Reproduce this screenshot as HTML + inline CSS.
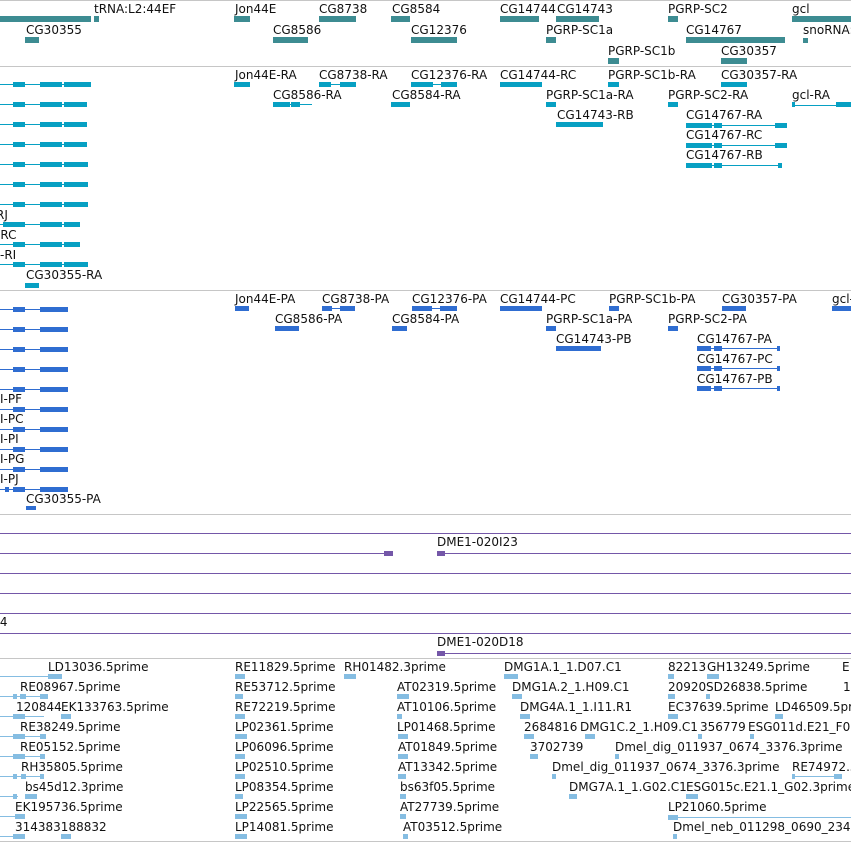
<!DOCTYPE html>
<html><head><meta charset="utf-8"><style>
html,body{margin:0;padding:0;background:#fff;width:851px;height:842px;overflow:hidden;position:relative}
.t{position:absolute;font:12px "DejaVu Sans","Liberation Sans",sans-serif;line-height:14px;white-space:nowrap;color:#111}
.b{position:absolute;height:5px}
.l{position:absolute;height:1px}
.g{background:#3d8c92}.c{background:#07a0c3}.u{background:#2f6dd1}.p{background:#7457a8}.e{background:#85bde2}
.s{position:absolute;left:0;width:851px;height:1px;background:#c6c6c6}
</style></head><body>
<div class="s" style="top:0"></div>
<div class="s" style="top:66px"></div>
<div class="s" style="top:290px"></div>
<div class="s" style="top:514px"></div>
<div class="s" style="top:658px"></div>
<div class="s" style="top:841px"></div>

<!-- Section 1 genes -->
<div class="t" style="left:94px;top:2px">tRNA:L2:44EF</div>
<div class="t" style="left:235px;top:2px">Jon44E</div>
<div class="t" style="left:319px;top:2px">CG8738</div>
<div class="t" style="left:392px;top:2px">CG8584</div>
<div class="t" style="left:500px;top:2px">CG14744</div>
<div class="t" style="left:557px;top:2px">CG14743</div>
<div class="t" style="left:668px;top:2px">PGRP-SC2</div>
<div class="t" style="left:792px;top:2px">gcl</div>
<div class="t" style="left:26px;top:23px">CG30355</div>
<div class="t" style="left:273px;top:23px">CG8586</div>
<div class="t" style="left:411px;top:23px">CG12376</div>
<div class="t" style="left:546px;top:23px">PGRP-SC1a</div>
<div class="t" style="left:686px;top:23px">CG14767</div>
<div class="t" style="left:803px;top:23px">snoRNA:</div>
<div class="t" style="left:608px;top:44px">PGRP-SC1b</div>
<div class="t" style="left:721px;top:44px">CG30357</div>
<div class="b g" style="left:0;top:16px;width:91px;height:6px"></div>
<div class="b g" style="left:94px;top:16px;width:5px;height:6px"></div>
<div class="b g" style="left:234px;top:16px;width:16px;height:6px"></div>
<div class="b g" style="left:319px;top:16px;width:37px;height:6px"></div>
<div class="b g" style="left:391px;top:16px;width:19px;height:6px"></div>
<div class="b g" style="left:500px;top:16px;width:39px;height:6px"></div>
<div class="b g" style="left:556px;top:16px;width:43px;height:6px"></div>
<div class="b g" style="left:668px;top:16px;width:10px;height:6px"></div>
<div class="b g" style="left:792px;top:16px;width:59px;height:6px"></div>
<div class="b g" style="left:25px;top:37px;width:14px;height:6px"></div>
<div class="b g" style="left:273px;top:37px;width:35px;height:6px"></div>
<div class="b g" style="left:411px;top:37px;width:46px;height:6px"></div>
<div class="b g" style="left:546px;top:37px;width:10px;height:6px"></div>
<div class="b g" style="left:686px;top:37px;width:99px;height:6px"></div>
<div class="b g" style="left:803px;top:38px;width:5px;height:5px"></div>
<div class="b g" style="left:608px;top:58px;width:11px;height:6px"></div>
<div class="b g" style="left:721px;top:58px;width:26px;height:6px"></div>

<!-- Section 2 transcripts -->
<div class="t" style="left:235px;top:68px">Jon44E-RA</div>
<div class="t" style="left:319px;top:68px">CG8738-RA</div>
<div class="t" style="left:411px;top:68px">CG12376-RA</div>
<div class="t" style="left:500px;top:68px">CG14744-RC</div>
<div class="t" style="left:608px;top:68px">PGRP-SC1b-RA</div>
<div class="t" style="left:721px;top:68px">CG30357-RA</div>
<div class="t" style="left:273px;top:88px">CG8586-RA</div>
<div class="t" style="left:392px;top:88px">CG8584-RA</div>
<div class="t" style="left:546px;top:88px">PGRP-SC1a-RA</div>
<div class="t" style="left:668px;top:88px">PGRP-SC2-RA</div>
<div class="t" style="left:792px;top:88px">gcl-RA</div>
<div class="t" style="left:557px;top:108px">CG14743-RB</div>
<div class="t" style="left:686px;top:108px">CG14767-RA</div>
<div class="t" style="left:686px;top:128px">CG14767-RC</div>
<div class="t" style="left:686px;top:148px">CG14767-RB</div>
<div class="t" style="left:-4px;top:208px">RJ</div>
<div class="t" style="left:-4px;top:228px">-RC</div>
<div class="t" style="left:0px;top:248px">-RI</div>
<div class="t" style="left:26px;top:268px">CG30355-RA</div>
<div class="b c" style="left:234px;top:82px;width:16px"></div>
<div class="l c" style="left:319px;top:84px;width:37px"></div>
<div class="b c" style="left:319px;top:82px;width:12px"></div>
<div class="b c" style="left:340px;top:82px;width:16px"></div>
<div class="l c" style="left:411px;top:84px;width:46px"></div>
<div class="b c" style="left:411px;top:82px;width:22px"></div>
<div class="b c" style="left:441px;top:82px;width:16px"></div>
<div class="b c" style="left:500px;top:82px;width:42px"></div>
<div class="b c" style="left:608px;top:82px;width:11px"></div>
<div class="b c" style="left:721px;top:82px;width:26px"></div>
<div class="l c" style="left:273px;top:104px;width:39px"></div>
<div class="b c" style="left:273px;top:102px;width:17px"></div>
<div class="b c" style="left:291px;top:102px;width:9px"></div>
<div class="b c" style="left:391px;top:102px;width:19px"></div>
<div class="b c" style="left:546px;top:102px;width:10px"></div>
<div class="b c" style="left:668px;top:102px;width:10px"></div>
<div class="l c" style="left:792px;top:105px;width:59px"></div>
<div class="b c" style="left:792px;top:102px;width:3px"></div>
<div class="b c" style="left:836px;top:102px;width:15px"></div>
<div class="b c" style="left:556px;top:122px;width:47px"></div>
<div class="l c" style="left:686px;top:125px;width:101px"></div>
<div class="b c" style="left:686px;top:123px;width:26px"></div>
<div class="b c" style="left:714px;top:123px;width:8px"></div>
<div class="b c" style="left:775px;top:123px;width:12px"></div>
<div class="l c" style="left:686px;top:145px;width:101px"></div>
<div class="b c" style="left:686px;top:143px;width:26px"></div>
<div class="b c" style="left:714px;top:143px;width:8px"></div>
<div class="b c" style="left:775px;top:143px;width:12px"></div>
<div class="l c" style="left:686px;top:165px;width:96px"></div>
<div class="b c" style="left:686px;top:163px;width:26px"></div>
<div class="b c" style="left:714px;top:163px;width:8px"></div>
<div class="b c" style="left:778px;top:163px;width:4px"></div>
<div class="b c" style="left:25px;top:283px;width:14px"></div>

<!-- left transcript rows sec2 -->
<div class="l c" style="left:0;top:84px;width:90px"></div><div class="b c" style="left:13px;top:82px;width:12px"></div><div class="b c" style="left:40px;top:82px;width:22px"></div><div class="b c" style="left:64px;top:82px;width:27px"></div>
<div class="l c" style="left:0;top:104px;width:86px"></div><div class="b c" style="left:13px;top:102px;width:12px"></div><div class="b c" style="left:40px;top:102px;width:22px"></div><div class="b c" style="left:64px;top:102px;width:23px"></div>
<div class="l c" style="left:0;top:124px;width:86px"></div><div class="b c" style="left:13px;top:122px;width:12px"></div><div class="b c" style="left:40px;top:122px;width:22px"></div><div class="b c" style="left:64px;top:122px;width:23px"></div>
<div class="l c" style="left:0;top:144px;width:86px"></div><div class="b c" style="left:13px;top:142px;width:12px"></div><div class="b c" style="left:40px;top:142px;width:22px"></div><div class="b c" style="left:64px;top:142px;width:23px"></div>
<div class="l c" style="left:0;top:164px;width:86px"></div><div class="b c" style="left:13px;top:162px;width:12px"></div><div class="b c" style="left:40px;top:162px;width:22px"></div><div class="b c" style="left:64px;top:162px;width:24px"></div>
<div class="l c" style="left:0;top:184px;width:86px"></div><div class="b c" style="left:13px;top:182px;width:12px"></div><div class="b c" style="left:40px;top:182px;width:22px"></div><div class="b c" style="left:64px;top:182px;width:24px"></div>
<div class="l c" style="left:0;top:204px;width:86px"></div><div class="b c" style="left:13px;top:202px;width:12px"></div><div class="b c" style="left:40px;top:202px;width:22px"></div><div class="b c" style="left:64px;top:202px;width:24px"></div>
<div class="l c" style="left:0;top:224px;width:78px"></div><div class="b c" style="left:3px;top:222px;width:22px"></div><div class="b c" style="left:40px;top:222px;width:22px"></div><div class="b c" style="left:64px;top:222px;width:16px"></div>
<div class="l c" style="left:0;top:244px;width:78px"></div><div class="b c" style="left:13px;top:242px;width:12px"></div><div class="b c" style="left:40px;top:242px;width:22px"></div><div class="b c" style="left:64px;top:242px;width:16px"></div>
<div class="l c" style="left:0;top:264px;width:86px"></div><div class="b c" style="left:13px;top:262px;width:12px"></div><div class="b c" style="left:40px;top:262px;width:22px"></div><div class="b c" style="left:64px;top:262px;width:24px"></div>

<!-- Section 3 proteins -->
<div class="t" style="left:235px;top:292px">Jon44E-PA</div>
<div class="t" style="left:322px;top:292px">CG8738-PA</div>
<div class="t" style="left:412px;top:292px">CG12376-PA</div>
<div class="t" style="left:500px;top:292px">CG14744-PC</div>
<div class="t" style="left:609px;top:292px">PGRP-SC1b-PA</div>
<div class="t" style="left:722px;top:292px">CG30357-PA</div>
<div class="t" style="left:832px;top:292px">gcl-</div>
<div class="t" style="left:275px;top:312px">CG8586-PA</div>
<div class="t" style="left:392px;top:312px">CG8584-PA</div>
<div class="t" style="left:546px;top:312px">PGRP-SC1a-PA</div>
<div class="t" style="left:668px;top:312px">PGRP-SC2-PA</div>
<div class="t" style="left:556px;top:332px">CG14743-PB</div>
<div class="t" style="left:697px;top:332px">CG14767-PA</div>
<div class="t" style="left:697px;top:352px">CG14767-PC</div>
<div class="t" style="left:697px;top:372px">CG14767-PB</div>
<div class="t" style="left:0px;top:392px">I-PF</div>
<div class="t" style="left:0px;top:412px">I-PC</div>
<div class="t" style="left:0px;top:432px">I-PI</div>
<div class="t" style="left:0px;top:452px">I-PG</div>
<div class="t" style="left:0px;top:472px">I-PJ</div>
<div class="t" style="left:26px;top:492px">CG30355-PA</div>
<div class="b u" style="left:235px;top:306px;width:14px"></div>
<div class="l u" style="left:322px;top:308px;width:33px"></div>
<div class="b u" style="left:322px;top:306px;width:10px"></div>
<div class="b u" style="left:340px;top:306px;width:15px"></div>
<div class="l u" style="left:412px;top:308px;width:45px"></div>
<div class="b u" style="left:412px;top:306px;width:20px"></div>
<div class="b u" style="left:440px;top:306px;width:17px"></div>
<div class="b u" style="left:500px;top:306px;width:42px"></div>
<div class="b u" style="left:609px;top:306px;width:10px"></div>
<div class="b u" style="left:722px;top:306px;width:24px"></div>
<div class="b u" style="left:832px;top:306px;width:19px"></div>
<div class="b u" style="left:275px;top:326px;width:24px"></div>
<div class="b u" style="left:392px;top:326px;width:15px"></div>
<div class="b u" style="left:546px;top:326px;width:10px"></div>
<div class="b u" style="left:668px;top:326px;width:10px"></div>
<div class="b u" style="left:556px;top:346px;width:45px"></div>
<div class="l u" style="left:697px;top:348px;width:83px"></div>
<div class="b u" style="left:697px;top:346px;width:14px"></div>
<div class="b u" style="left:714px;top:346px;width:8px"></div>
<div class="b u" style="left:777px;top:346px;width:3px"></div>
<div class="l u" style="left:697px;top:368px;width:83px"></div>
<div class="b u" style="left:697px;top:366px;width:14px"></div>
<div class="b u" style="left:714px;top:366px;width:8px"></div>
<div class="b u" style="left:777px;top:366px;width:3px"></div>
<div class="l u" style="left:697px;top:388px;width:83px"></div>
<div class="b u" style="left:697px;top:386px;width:14px"></div>
<div class="b u" style="left:714px;top:386px;width:8px"></div>
<div class="b u" style="left:777px;top:386px;width:3px"></div>
<div class="b u" style="left:26px;top:506px;width:10px;height:4px"></div>

<div class="l u" style="left:0;top:309px;width:68px"></div><div class="b u" style="left:13px;top:307px;width:12px"></div><div class="b u" style="left:40px;top:307px;width:28px"></div>
<div class="l u" style="left:0;top:329px;width:68px"></div><div class="b u" style="left:13px;top:327px;width:12px"></div><div class="b u" style="left:40px;top:327px;width:28px"></div>
<div class="l u" style="left:0;top:349px;width:68px"></div><div class="b u" style="left:13px;top:347px;width:12px"></div><div class="b u" style="left:40px;top:347px;width:28px"></div>
<div class="l u" style="left:0;top:369px;width:68px"></div><div class="b u" style="left:13px;top:367px;width:12px"></div><div class="b u" style="left:40px;top:367px;width:28px"></div>
<div class="l u" style="left:0;top:389px;width:68px"></div><div class="b u" style="left:13px;top:387px;width:12px"></div><div class="b u" style="left:40px;top:387px;width:28px"></div>
<div class="l u" style="left:0;top:409px;width:68px"></div><div class="b u" style="left:13px;top:407px;width:12px"></div><div class="b u" style="left:40px;top:407px;width:28px"></div>
<div class="l u" style="left:0;top:429px;width:68px"></div><div class="b u" style="left:13px;top:427px;width:12px"></div><div class="b u" style="left:40px;top:427px;width:28px"></div>
<div class="l u" style="left:0;top:449px;width:68px"></div><div class="b u" style="left:13px;top:447px;width:12px"></div><div class="b u" style="left:40px;top:447px;width:28px"></div>
<div class="l u" style="left:0;top:469px;width:68px"></div><div class="b u" style="left:13px;top:467px;width:12px"></div><div class="b u" style="left:40px;top:467px;width:28px"></div>
<div class="l u" style="left:0;top:489px;width:68px"></div><div class="b u" style="left:5px;top:487px;width:4px"></div><div class="b u" style="left:13px;top:487px;width:12px"></div><div class="b u" style="left:40px;top:487px;width:28px"></div>

<!-- Section 4 clones -->
<div class="l p" style="left:0;top:533px;width:851px"></div>
<div class="t" style="left:437px;top:535px">DME1-020I23</div>
<div class="l p" style="left:0;top:553px;width:393px"></div>
<div class="b p" style="left:384px;top:551px;width:9px"></div>
<div class="l p" style="left:437px;top:553px;width:414px"></div>
<div class="b p" style="left:437px;top:551px;width:8px"></div>
<div class="l p" style="left:0;top:573px;width:851px"></div>
<div class="l p" style="left:0;top:593px;width:851px"></div>
<div class="l p" style="left:0;top:613px;width:851px"></div>
<div class="t" style="left:-4px;top:615px">.4</div>
<div class="l p" style="left:0;top:633px;width:851px"></div>
<div class="t" style="left:437px;top:635px">DME1-020D18</div>
<div class="l p" style="left:437px;top:653px;width:414px"></div>
<div class="b p" style="left:437px;top:651px;width:8px"></div>

<!-- Section 5 ESTs -->
<div class="t" style="left:48px;top:660px">LD13036.5prime</div>
<div class="t" style="left:235px;top:660px">RE11829.5prime</div>
<div class="t" style="left:344px;top:660px">RH01482.3prime</div>
<div class="t" style="left:504px;top:660px">DMG1A.1_1.D07.C1</div>
<div class="t" style="left:668px;top:660px">82213</div>
<div class="t" style="left:707px;top:660px">GH13249.5prime</div>
<div class="t" style="left:842px;top:660px">E</div>
<div class="t" style="left:20px;top:680px">RE08967.5prime</div>
<div class="t" style="left:235px;top:680px">RE53712.5prime</div>
<div class="t" style="left:397px;top:680px">AT02319.5prime</div>
<div class="t" style="left:512px;top:680px">DMG1A.2_1.H09.C1</div>
<div class="t" style="left:668px;top:680px">20920</div>
<div class="t" style="left:706px;top:680px">SD26838.5prime</div>
<div class="t" style="left:843px;top:680px">1</div>
<div class="t" style="left:16px;top:700px">120844</div>
<div class="t" style="left:61px;top:700px">EK133763.5prime</div>
<div class="t" style="left:235px;top:700px">RE72219.5prime</div>
<div class="t" style="left:397px;top:700px">AT10106.5prime</div>
<div class="t" style="left:520px;top:700px">DMG4A.1_1.I11.R1</div>
<div class="t" style="left:668px;top:700px">EC37639.5prime</div>
<div class="t" style="left:775px;top:700px">LD46509.5prime</div>
<div class="t" style="left:20px;top:720px">RE38249.5prime</div>
<div class="t" style="left:235px;top:720px">LP02361.5prime</div>
<div class="t" style="left:397px;top:720px">LP01468.5prime</div>
<div class="t" style="left:524px;top:720px">2684816</div>
<div class="t" style="left:580px;top:720px">DMG1C.2_1.H09.C1</div>
<div class="t" style="left:700px;top:720px">356779</div>
<div class="t" style="left:748px;top:720px">ESG011d.E21_F05</div>
<div class="t" style="left:20px;top:740px">RE05152.5prime</div>
<div class="t" style="left:235px;top:740px">LP06096.5prime</div>
<div class="t" style="left:398px;top:740px">AT01849.5prime</div>
<div class="t" style="left:530px;top:740px">3702739</div>
<div class="t" style="left:615px;top:740px">Dmel_dig_011937_0674_3376.3prime</div>
<div class="t" style="left:21px;top:760px">RH35805.5prime</div>
<div class="t" style="left:235px;top:760px">LP02510.5prime</div>
<div class="t" style="left:398px;top:760px">AT13342.5prime</div>
<div class="t" style="left:552px;top:760px">Dmel_dig_011937_0674_3376.3prime</div>
<div class="t" style="left:792px;top:760px">RE74972.5</div>
<div class="t" style="left:25px;top:780px">bs45d12.3prime</div>
<div class="t" style="left:235px;top:780px">LP08354.5prime</div>
<div class="t" style="left:400px;top:780px">bs63f05.5prime</div>
<div class="t" style="left:569px;top:780px">DMG7A.1_1.G02.C1</div>
<div class="t" style="left:686px;top:780px">ESG015c.E21.1_G02.3prime</div>
<div class="t" style="left:15px;top:800px">EK195736.5prime</div>
<div class="t" style="left:235px;top:800px">LP22565.5prime</div>
<div class="t" style="left:400px;top:800px">AT27739.5prime</div>
<div class="t" style="left:668px;top:800px">LP21060.5prime</div>
<div class="t" style="left:15px;top:820px">314383188832</div>
<div class="t" style="left:235px;top:820px">LP14081.5prime</div>
<div class="t" style="left:403px;top:820px">AT03512.5prime</div>
<div class="t" style="left:673px;top:820px">Dmel_neb_011298_0690_234</div>

<!-- EST bars -->
<div class="l e" style="left:0;top:676px;width:48px"></div><div class="b e" style="left:48px;top:674px;width:14px"></div>
<div class="b e" style="left:235px;top:674px;width:10px"></div>
<div class="b e" style="left:344px;top:674px;width:12px"></div>
<div class="b e" style="left:504px;top:674px;width:14px"></div>
<div class="b e" style="left:668px;top:674px;width:6px"></div>
<div class="b e" style="left:707px;top:674px;width:12px"></div>
<div class="l e" style="left:0;top:696px;width:48px"></div><div class="b e" style="left:13px;top:694px;width:4px"></div><div class="b e" style="left:20px;top:694px;width:6px"></div><div class="b e" style="left:40px;top:694px;width:8px"></div>
<div class="b e" style="left:235px;top:694px;width:8px"></div>
<div class="b e" style="left:397px;top:694px;width:12px"></div>
<div class="b e" style="left:512px;top:694px;width:10px"></div>
<div class="b e" style="left:668px;top:694px;width:7px"></div>
<div class="b e" style="left:706px;top:694px;width:4px"></div>
<div class="l e" style="left:0;top:716px;width:44px"></div><div class="b e" style="left:13px;top:714px;width:12px"></div><div class="b e" style="left:61px;top:714px;width:10px"></div>
<div class="b e" style="left:235px;top:714px;width:10px"></div>
<div class="b e" style="left:397px;top:714px;width:5px"></div>
<div class="b e" style="left:520px;top:714px;width:10px"></div>
<div class="b e" style="left:668px;top:714px;width:10px"></div>
<div class="b e" style="left:775px;top:714px;width:8px"></div>
<div class="l e" style="left:0;top:736px;width:46px"></div><div class="b e" style="left:13px;top:734px;width:12px"></div><div class="b e" style="left:40px;top:734px;width:6px"></div>
<div class="b e" style="left:235px;top:734px;width:12px"></div>
<div class="b e" style="left:398px;top:734px;width:10px"></div>
<div class="b e" style="left:524px;top:734px;width:10px"></div>
<div class="b e" style="left:585px;top:734px;width:10px"></div>
<div class="b e" style="left:698px;top:734px;width:4px"></div>
<div class="b e" style="left:750px;top:734px;width:4px"></div>
<div class="l e" style="left:0;top:756px;width:44px"></div><div class="b e" style="left:13px;top:754px;width:12px"></div><div class="b e" style="left:40px;top:754px;width:5px"></div>
<div class="b e" style="left:235px;top:754px;width:10px"></div>
<div class="b e" style="left:398px;top:754px;width:10px"></div>
<div class="b e" style="left:530px;top:754px;width:8px"></div>
<div class="b e" style="left:615px;top:754px;width:4px"></div>
<div class="l e" style="left:0;top:776px;width:44px"></div><div class="b e" style="left:13px;top:774px;width:4px"></div><div class="b e" style="left:21px;top:774px;width:5px"></div><div class="b e" style="left:40px;top:774px;width:4px"></div>
<div class="b e" style="left:235px;top:774px;width:10px"></div>
<div class="b e" style="left:398px;top:774px;width:8px"></div>
<div class="b e" style="left:552px;top:774px;width:4px"></div>
<div class="l e" style="left:792px;top:776px;width:45px"></div><div class="b e" style="left:792px;top:774px;width:3px"></div><div class="b e" style="left:834px;top:774px;width:8px"></div>
<div class="l e" style="left:0;top:796px;width:18px"></div><div class="b e" style="left:13px;top:794px;width:4px"></div><div class="b e" style="left:25px;top:794px;width:12px"></div>
<div class="b e" style="left:235px;top:794px;width:8px"></div>
<div class="b e" style="left:400px;top:794px;width:6px"></div>
<div class="b e" style="left:569px;top:794px;width:8px"></div>
<div class="b e" style="left:686px;top:794px;width:12px"></div>
<div class="l e" style="left:0;top:816px;width:20px"></div><div class="b e" style="left:15px;top:814px;width:10px"></div>
<div class="b e" style="left:235px;top:814px;width:12px"></div>
<div class="b e" style="left:400px;top:814px;width:6px"></div>
<div class="l e" style="left:668px;top:817px;width:183px"></div><div class="b e" style="left:668px;top:815px;width:10px"></div>
<div class="l e" style="left:0;top:836px;width:25px"></div><div class="b e" style="left:13px;top:834px;width:12px"></div><div class="b e" style="left:61px;top:834px;width:10px"></div>
<div class="b e" style="left:235px;top:834px;width:12px"></div>
<div class="b e" style="left:403px;top:834px;width:5px"></div>
<div class="b e" style="left:673px;top:834px;width:4px"></div>
</body></html>
